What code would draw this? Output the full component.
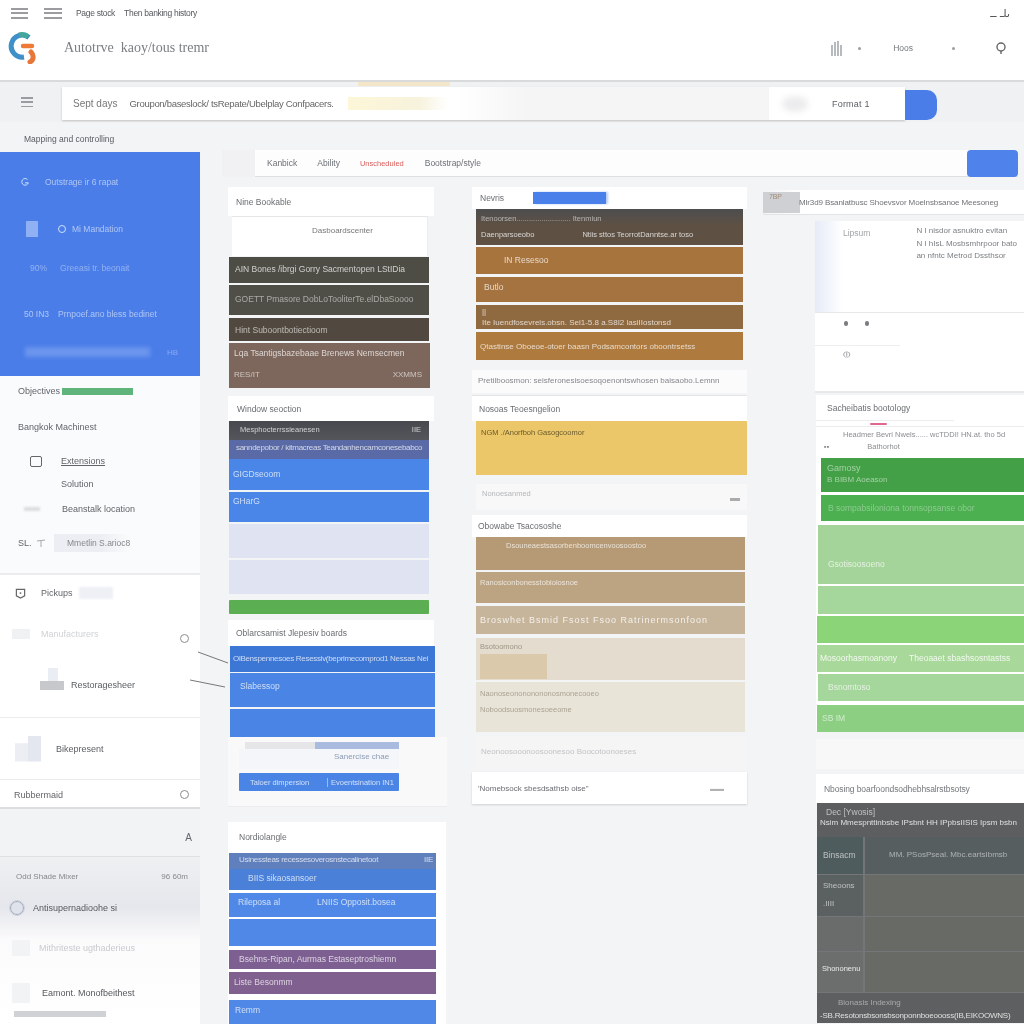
<div class="page">
  <header class="top">
    <div class="top-a">
      <span class="burger b1"><i></i><i></i><i></i></span>
      <span class="burger b2"><i></i><i></i><i></i></span>
      <span class="crumb c1">Page stock</span>
      <span class="crumb">Then banking history</span>
      <span class="sign">ىلـ ــ</span>
    </div>
    <div class="top-b">
      <svg class="logo" viewBox="0 0 30 32" width="30" height="32" aria-hidden="true">
        <path d="M21 5.5A11 11 0 1 0 16 25" fill="none" stroke="#3f8fc8" stroke-width="5"/>
        <path d="M20 4.6A11 11 0 0 0 11 3" fill="none" stroke="#43a89a" stroke-width="5"/>
        <path d="M15 14h9" stroke="#ee7a35" stroke-width="4.5" stroke-linecap="round"/>
        <path d="M23 20c3 3 3 8-1 10" fill="none" stroke="#e8763a" stroke-width="5" stroke-linecap="round"/>
      </svg>
      <span class="title">Autotrve &nbsp;kaoy/tous tremr</span>
      <span class="tools">
        <svg class="bars" viewBox="0 0 14 16" width="14" height="16" aria-hidden="true"><path d="M2 5v11M5 2v14M8 1v15M11 5v11" stroke="#9a9da1" stroke-width="1.4"/></svg>
        <i class="tdot d1"></i>
        <span class="hoos">Hoos</span>
        <i class="tdot d2"></i>
        <svg class="lens" viewBox="0 0 12 14" width="12" height="14" aria-hidden="true"><circle cx="6" cy="6" r="4" fill="none" stroke="#666" stroke-width="1.4"/><path d="M6 10v3" stroke="#666" stroke-width="1.4"/></svg>
      </span>
    </div>
  </header>

  <div class="searchrow">
    <span class="burger b3"><i></i><i></i><i></i></span>
    <div class="searchbar">
      <span class="s1">Sept days</span>
      <span class="s2">Groupon/baseslock/ tsRepate/Ubelplay Confpacers.</span>
      <span class="glow"></span>
      <div class="format"><i class="smudge"></i><span>Format 1</span></div>
    </div>
    <div class="go"></div>
    <span class="orange"></span>
  </div>

  <div class="body">
    <aside class="side">
      <div class="side-label">Mapping and controlling</div>
      <nav class="bluepanel">
        <div class="srow sr1">
          <svg viewBox="0 0 12 12" width="10" height="10" aria-hidden="true"><path d="M9 3a4 4 0 1 0 1 4H6" fill="none" stroke="#cfe0ff" stroke-width="1.2"/></svg>
          <span>Outstrage ir 6 rapat</span>
        </div>
        <div class="srow sr2"><i class="pale"></i><i class="ring"></i><span>Mi Mandation</span></div>
        <div class="srow sr3"><b>90%</b><span>Greeasi tr. beonait</span></div>
        <div class="srow sr4"><b>50 IN3</b><span>Prnpoef.ano bless bedinet</span></div>
        <div class="srow sr5"><i class="haze"></i><em>HB</em></div>
      </nav>
      <div class="sidelist">
        <div class="prog"><span>Objectives</span><i></i></div>
        <div class="lhead">Bangkok Machinest</div>
        <div class="lrow l1"><i class="box"></i><span class="ul">Extensions</span></div>
        <div class="lrow l2"><span>Solution</span></div>
        <div class="lrow l3"><i class="dash"></i><span>Beanstalk location</span></div>
        <div class="lrow l4"><span class="sl">SL.</span><svg viewBox="0 0 10 10" width="10" height="10" aria-hidden="true"><path d="M1 3l8-1M5 2v7" stroke="#a6a9ad" stroke-width="1"/></svg><span class="pill">Mmetlin S.arioc8</span></div>
      </div>
      <div class="pick">
        <div class="p1">
          <svg viewBox="0 0 12 12" width="11" height="11" aria-hidden="true"><path d="M1.5 1.5h9v7l-4.500 2.500-4.500-2.500z" fill="none" stroke="#666" stroke-width="1.300"/><circle cx="6" cy="5.500" r="1" fill="#666"/></svg>
          <span>Pickups</span><i class="fog"></i>
        </div>
        <div class="p2"><i class="fog2"></i><span>Manufacturers</span><i class="circle cdown"></i></div>
        <div class="p3"><span class="stack"><i></i><i></i></span><span>Restoragesheer</span></div>
      </div>
      <div class="bike"><span class="steps"><i></i></span><span>Bikepresent</span></div>
      <div class="rub"><span>Rubbermaid</span><i class="circle"></i></div>
      <div class="gap"><span>A</span></div>
      <div class="odd">
        <div class="oddhead"><span>Odd Shade Mixer</span><span>96 60m</span></div>
        <div class="oddactive"><i class="ring2"></i><span>Antisupernadioohe si</span></div>
        <div class="oddfaint"><i></i><span>Mithriteste ugthaderieus</span></div>
        <div class="oddlast"><i></i><span>Eamont. Monofbeithest</span></div>
        <div class="oddbar"></div>
      </div>
    </aside>

    <main class="work">
      <div class="toolbar">
        <span class="tab"></span>
        <span class="ti t1">Kanbick</span>
        <span class="ti t2">Ability</span>
        <span class="ti t3">Unscheduled</span>
        <span class="ti t4">Bootstrap/style</span>
        <span class="tbtn"></span>
      </div>

      <div class="board">
        <div class="col col1">
          <div class="chead ch1">Nine Bookable</div>
          <div class="subbox">Dasboardscenter</div>
          <div class="band a1">AIN Bones /ibrgi Gorry Sacmentopen LStIDia</div>
          <div class="band a2">GOETT Pmasore DobLoTooliterTe.elDbaSoooo</div>
          <div class="band a3">Hint Suboontbotiectioom</div>
          <div class="band a4"><span>Lqa Tsantigsbazebaae Brenews Nemsecmen</span><small><span>RES/IT</span><span>XXMMS</span></small></div>

          <div class="chead ch2">Window seoction</div>
          <div class="band b-a"><span>Mesphocterrssieanesen</span><span>IIE</span></div>
          <div class="band b-b">sanndepobor / kitmacreas Teandanhencamconesebabco</div>
          <div class="band b-c">GIGDseoom</div>
          <div class="band b-d">GHarG</div>
          <div class="band b-e"></div>
          <div class="band b-f"></div>
          <div class="band b-g"></div>

          <div class="chead ch3">Oblarcsamist Jlepesiv boards</div>
          <div class="band e1">OlBenspennesoes Resessiv(beprimecomprod1 Nessas Nei</div>
          <div class="band e2">Slabessop</div>
          <div class="band e3"></div>

          <div class="nest">
            <div class="nest-bar"><i></i><i></i></div>
            <div class="nest-text"><span>Sanercise chae</span></div>
            <div class="nest-btn"><span>Taloer dimpersion</span><span>Evoentsination IN1</span></div>
          </div>

          <div class="lastcard">
            <div class="lc-head">Nordiolangle</div>
            <div class="band f1"><div class="f1top"><span>Usinessteas recessesoverosnstecalinetoot</span><span>IIE</span></div><div class="f1sub">BIIS sikaosansoer</div></div>
            <div class="band f2"><span>Rileposa al</span><span>LNIIS Opposit.bosea</span></div>
            <div class="band f3"></div>
            <div class="band f4">Bsehns-Ripan, Aurmas Estaseptroshiemn</div>
            <div class="band f5">Liste Besonmm</div>
            <div class="band f6">Remm</div>
          </div>
        </div>

        <div class="col col2">
          <div class="chead g0"><span>Nevris</span><i class="bluepill"></i></div>
          <div class="band g1"><span>Itenoorsen.......................... Itenmiun</span><span class="g1b"><span>Daenparsoeobo</span><span>Ntiis sttos TeorrotDanntse.ar toso</span></span></div>
          <div class="band g2"><span>IN Resesoo</span></div>
          <div class="band g3">Butlo</div>
          <div class="band g4"><span>||</span><span>Ite Iuendfosevreis.obsn. Sei1-5.8 a.S8I2 lasiIIostonsd</span></div>
          <div class="band g5">Qtastinse Oboeoe-otoer baasn Podsamcontors oboontrsetss</div>
          <div class="noteline">Pretilboosmon: seisferonesisoesoqoenontswhosen baisaobo.Lemnn</div>
          <div class="chead g6">Nosoas Teoesngelion</div>
          <div class="band g7">NGM ./Anorfboh Gasogcoomor</div>
          <div class="paleblock"><span>Nonoesanmed</span><i></i></div>
          <div class="chead g8">Obowabe Tsacososhe</div>
          <div class="band h1"><span>Dsouneaestsasorbenboomcenvoosoostoo</span></div>
          <div class="band h2"><span>Ranosiconbonesstobioiosnoe</span></div>
          <div class="band h3"><span>Broswhet Bsmid Fsost Fsoo Ratrinermsonfoon</span></div>
          <div class="band h4"><span>Bsotoomono</span><i class="dither"></i></div>
          <div class="band h5"><span>Naonoseonononononosmonecooeo</span><span>Noboodsuosmonesoeeome</span></div>
          <div class="soft"><span>Neonoosooonoosoonesoo Boocotoonoeses</span></div>
          <div class="foot"><span>'Nomebsock sbesdsathsb oise"</span><span class="fw">▬▬</span></div>
        </div>

        <div class="col col3">
          <div class="c3head"><span class="thumb">7BP</span><span>Mlr3d9 Bsanlatbusc Shoevsvor Moelnsbsanoe Meesoneg</span></div>
          <div class="c3box">
            <div class="cb-top"><span>Lipsum</span><div class="cb-lines"><span>N I nisdor asnuktro evitan</span><span>N I hIsL Mosbsmhrpoor bato</span><span>an nfntc Metrod Dssthsor</span></div></div>
            <div class="cb-dots"><i></i><i></i></div>
            <div class="cb-last"><span>⦶</span></div>
          </div>
          <div class="c3sec">
            <div class="sec-title">Sacheibatis bootology</div>
            <div class="sec-mark"><i></i></div>
            <div class="sec-l1">Headmer Bevri Nwels...... wcTDDI! HN.at. tho 5d</div>
            <div class="sec-l2"><span>▪▪</span><span>Bathorhot</span></div>
            <div class="band k1"><span class="gtitle">Gamosy</span><span>B BIBM Aoeason</span></div>
            <div class="band k2">B sompabsiloniona tonnsopsanse obor</div>
            <div class="band k3">Gsotisoosoeno</div>
            <div class="band k4"></div>
            <div class="band k5"></div>
            <div class="band k6"><span>Mosoorhasmoanony</span><span>Theoaaet sbashsosntastss</span></div>
            <div class="band k7">Bsnomtoso</div>
            <div class="band k8">SB IM</div>
          </div>
          <div class="softgap"></div>
          <div class="grayhead">Nbosing boarfoondsodhebhsalrstbsotsy</div>
          <div class="graypanel">
            <div class="gp-top"><span>Dec [Ywosis]</span><span class="gp-long">Nsim Mmespnttinbsbe IPsbnt HH IPpbsIISIS Ipsm bsbn</span></div>
            <div class="gp-r1"><span class="gl gl1">Binsacm</span><span class="gr gr1">MM. PSosPseal. Mbc.eartsIbmsb</span></div>
            <div class="gp-r2"><span class="gl gl2"><span>Sheoons</span><span>.IIII</span></span><span class="gr gr2"></span></div>
            <div class="gp-r3"><span class="gl gl3"></span><span class="gr gr3"></span></div>
            <div class="gp-r4"><span class="gl gl4">Shononenu</span><span class="gr gr4"></span></div>
            <div class="gp-end"><span class="e-a">Bionasis Indexing</span><span class="e-b">-SB.Resotonsbsonsbsonponnboeoooss(IB,EIKOOWNS)</span></div>
          </div>
        </div>
      </div>
    </main>
  </div>

  <svg class="leaders" viewBox="0 0 40 40" width="40" height="40" aria-hidden="true">
    <path d="M8 2l30 11M0 30l35 7" stroke="#777" stroke-width="1" fill="none"/>
  </svg>
</div>

<style>
  :global(body) { margin: 0; background: #f3f4f6; }
  .page { position: relative; width: 1024px; height: 1024px; overflow: hidden; display: flex; flex-direction: column; background: #f3f4f6; font-family: "Liberation Sans", Arial, sans-serif; font-size: 9px; color: #62656a; white-space: nowrap; filter: blur(.35px); }
  i, em { font-style: normal; display: block; }
  .top { height: 82px; flex: none; box-sizing: border-box; background: #fff; border-bottom: 2px solid #d9dadb; }
  .top-a { height: 30px; display: flex; align-items: center; }
  .burger { display: flex; flex-direction: column; justify-content: space-between; height: 11px; flex: none; }
  .burger i { height: 2px; background: #9b9ca0; }
  .b1 { width: 17px; margin: 0 0 4px 11px; }
  .b2 { width: 18px; margin: 0 0 4px 16px; }
  .crumb { font-size: 8.500px; color: #55585c; margin-bottom: 4px; margin-left: 9px; letter-spacing: -.3px; }
  .c1 { margin-left: 14px; }
  .sign { margin-left: auto; margin-right: 14px; margin-bottom: 4px; font-size: 11px; color: #555; font-family: "DejaVu Sans", sans-serif; }
  .top-b { height: 36px; display: flex; align-items: center; padding-left: 8px; }
  .logo { flex: none; }
  .title { font-size: 14px; color: #7b7e82; margin-left: 26px; font-family: "Liberation Serif", serif; }
  .tools { margin-left: auto; display: flex; align-items: center; padding-right: 17px; }
  .tdot { width: 3px; height: 3px; border-radius: 50%; background: #9a9da1; }
  .d1 { margin-left: 14px; }
  .hoos { font-size: 8.500px; margin-left: 32px; color: #75787c; }
  .d2 { margin-left: 39px; }
  .lens { margin-left: 40px; }

  .searchrow { height: 40px; flex: none; position: relative; display: flex; align-items: center; background: #f0f1f2; }
  .b3 { width: 12px; height: 10px; margin: 0 29px 0 21px; }
  .b3 i { height: 1.500px; }
  .searchbar { width: 843px; height: 33px; flex: none; display: flex; align-items: center; margin-top: 3px; background: linear-gradient(90deg, #fff 0, #fff 47%, #f5f5f6 55%, #f4f4f5 100%); box-shadow: 0 1px 2px rgba(0,0,0,.2); }
  .s1 { font-size: 10px; margin-left: 11px; color: #777; }
  .s2 { font-size: 9.500px; margin-left: 12px; width: 214px; color: #666; letter-spacing: -.3px; }
  .glow { width: 100px; height: 13px; margin-left: 5px; background: linear-gradient(90deg, #fdf7d8, #f7f2dc 70%, rgba(247,242,220,0)); }
  .format { margin-left: auto; width: 136px; height: 33px; background: #fff; display: flex; align-items: center; font-size: 9px; color: #5d6064; }
  .smudge { width: 26px; height: 16px; margin-left: 13px; border-radius: 50%; background: #ececee; filter: blur(3px); }
  .format span { margin-left: 24px; letter-spacing: .2px; }
  .go { width: 32px; height: 30px; flex: none; margin-top: 6px; background: #4a7de8; border-radius: 0 10px 10px 0; }
  .orange { position: absolute; left: 358px; top: 0; width: 92px; height: 4px; background: #f4e6c8; }

  .body { flex: 1; display: flex; min-height: 0; }
  .side { width: 200px; flex: none; display: flex; flex-direction: column; }
  .side-label { height: 30px; box-sizing: border-box; padding: 12px 0 0 24px; font-size: 8.500px; color: #5a5d61; }
  .bluepanel { height: 224px; flex: none; box-sizing: border-box; padding-top: 22px; background: #4a7de8; color: rgba(255,255,255,.55); }
  .srow { height: 16px; display: flex; align-items: center; font-size: 8.500px; }
  .sr1 { padding-left: 20px; }
  .sr1 span { margin-left: 15px; }
  .sr2 { margin-top: 31px; padding-left: 26px; }
  .pale { width: 12px; height: 16px; background: #8fb0f2; }
  .ring { width: 6px; height: 6px; margin-left: 20px; border: 1px solid #cfe0ff; border-radius: 50%; }
  .sr2 span { margin-left: 6px; }
  .sr3 { margin-top: 23px; padding-left: 30px; opacity: .7; }
  .sr3 b, .sr4 b { font-weight: 400; }
  .sr3 span { margin-left: 13px; }
  .sr4 { margin-top: 30px; padding-left: 24px; }
  .sr4 span { margin-left: 9px; }
  .sr5 { margin-top: 22px; padding-left: 25px; }
  .haze { width: 125px; height: 10px; background: #6b95ed; filter: blur(2px); }
  .sr5 em { margin-left: 17px; font-size: 8px; opacity: .6; }

  .sidelist { height: 199px; flex: none; box-sizing: border-box; background: #fafbfc; border-bottom: 2px solid #ececee; padding: 9px 0 0 18px; }
  .prog { display: flex; align-items: center; height: 12px; }
  .prog span { width: 44px; }
  .prog i { width: 71px; height: 7px; background: #5fb47c; }
  .lhead { margin-top: 24px; height: 12px; line-height: 12px; }
  .lrow { display: flex; align-items: center; height: 12px; }
  .l1 { margin-top: 22px; padding-left: 12px; }
  .box { width: 10px; height: 9px; border: 1px solid #666; border-radius: 2px; }
  .ul { margin-left: 19px; text-decoration: underline; }
  .l2 { margin-top: 11px; padding-left: 43px; }
  .l3 { margin-top: 13px; padding-left: 6px; }
  .dash { width: 16px; height: 4px; background: #dcdde0; filter: blur(1px); }
  .l3 span { margin-left: 22px; }
  .l4 { margin-top: 22px; }
  .sl { width: 18px; }
  .l4 svg { margin-right: 5px; }
  .pill { height: 18px; line-height: 18px; padding: 0 0 0 13px; margin-left: 3px; background: linear-gradient(90deg, #eceef3 60%, #fafbfc); color: #85888c; font-size: 8.500px; }

  .pick { height: 143px; flex: none; box-sizing: border-box; background: #fff; border-bottom: 1px solid #ececee; padding: 12px 0 0 15px; }
  .p1 { display: flex; align-items: center; height: 12px; }
  .p1 span { margin-left: 15px; }
  .fog { width: 34px; height: 12px; margin-left: 6px; background: #eef0f5; filter: blur(1px); }
  .p2 { margin-top: 28px; display: flex; align-items: center; height: 14px; color: #d0d2d5; }
  .fog2 { width: 18px; height: 10px; margin-left: -3px; background: #f0f1f2; }
  .p2 span { margin-left: 11px; }
  .circle { width: 7px; height: 7px; flex: none; border: 1px solid #8b8d90; border-radius: 50%; margin-left: auto; margin-right: 11px; }
  .cdown { margin-top: 9px; }
  .p3 { margin-top: 27px; display: flex; align-items: flex-end; }
  .stack { width: 24px; margin-left: 25px; display: block; }
  .stack i:first-child { width: 10px; height: 13px; margin-left: 8px; background: #eaeef4; }
  .stack i:last-child { width: 24px; height: 9px; background: #c6c8cb; }
  .p3 span:last-child { margin-left: 7px; color: #5b5e62; }

  .bike { height: 62px; flex: none; box-sizing: border-box; background: #fff; border-bottom: 1px solid #ececee; display: flex; align-items: center; padding-left: 15px; color: #5b5e62; }
  .steps { width: 26px; height: 26px; background: linear-gradient(90deg, #eceef4 50%, #e4e7f0 50%); clip-path: polygon(0 30%, 50% 30%, 50% 0, 100% 0, 100% 100%, 0 100%); }
  .bike span:last-child { margin-left: 15px; }
  .rub { height: 29px; flex: none; box-sizing: border-box; background: #fff; border-bottom: 2px solid #dcdde0; display: flex; align-items: center; padding: 2px 0 0 14px; }
  .gap { height: 48px; flex: none; box-sizing: border-box; background: #f2f3f4; border-bottom: 1px solid #dfe0e2; display: flex; align-items: flex-end; justify-content: flex-end; padding: 0 8px 13px 0; font-size: 10px; }
  .odd { flex: 1; background: linear-gradient(180deg, #eff0f2 0, #e6e7ec 30%, #fbfbfc 50%, #fff 100%); padding: 15px 0 0; }
  .oddhead { display: flex; justify-content: space-between; padding: 0 12px 0 16px; font-size: 8px; color: #85888c; }
  .oddactive { margin-top: 15px; height: 24px; display: flex; align-items: center; padding-left: 10px; color: #55585c; }
  .ring2 { width: 12px; height: 12px; border: 1px solid #9ea7b8; border-radius: 50%; background: #dfe3ec; outline: 1px solid #d0d4dc; }
  .oddactive span { margin-left: 9px; }
  .oddfaint { margin-top: 20px; height: 16px; display: flex; align-items: center; padding-left: 12px; color: #c8cace; }
  .oddfaint i, .oddlast i { width: 18px; height: 16px; background: #f2f3f5; }
  .oddfaint span { margin-left: 9px; }
  .oddlast { margin-top: 27px; height: 20px; display: flex; align-items: center; padding-left: 12px; color: #55585c; }
  .oddlast i { height: 20px; }
  .oddlast span { margin-left: 12px; }
  .oddbar { width: 92px; height: 6px; margin: 8px 0 0 14px; background: #d0d1d4; }

  .work { flex: 1; min-width: 0; padding-top: 28px; }
  .toolbar { margin-left: 22px; margin-right: 6px; height: 27px; box-sizing: border-box; display: flex; align-items: center; background: #fdfdfe; border-bottom: 1px solid #dedfe1; font-size: 8.500px; }
  .tab { width: 33px; height: 27px; background: #f1f1f3; }
  .ti { color: #6d7074; }
  .t1 { margin-left: 12px; }
  .t2 { margin-left: 20px; }
  .t3 { margin-left: 20px; color: #d8605c; font-size: 7.500px; }
  .t4 { margin-left: 21px; }
  .tbtn { margin-left: auto; width: 51px; height: 27px; border-radius: 4px; background: #4f82ea; }

  .board { margin-top: 10px; display: flex; align-items: flex-start; }
  .col { flex: none; display: flex; flex-direction: column; }
  .col1 { width: 219px; margin-left: 28px; }
  .col2 { width: 275px; margin-left: 25px; }
  .col3 { width: 261px; margin-left: 16px; }
  .chead { flex: none; box-sizing: border-box; background: #fff; font-size: 8.500px; color: #6a6d71; display: flex; align-items: center; padding-left: 8px; }
  .band { flex: none; box-sizing: border-box; color: rgba(255,255,255,.72); font-size: 8.500px; }

  .ch1 { width: 206px; height: 29px; }
  .subbox { width: 196px; height: 40px; margin-left: 4px; box-sizing: border-box; padding: 9px 0 0 80px; background: #fff; border-top: 1px solid #e6e6e8; border-right: 1px solid #ececee; color: #777; font-size: 8px; }
  .a1 { width: 200px; height: 26px; margin: 1px 0 0 1px; padding: 7px 0 0 6px; background: #4e4d45; }
  .a2 { width: 200px; height: 30px; margin: 2px 0 0 1px; padding: 9px 0 0 6px; background: #504f47; color: rgba(255,255,255,.5); }
  .a3 { width: 200px; height: 23px; margin: 3px 0 0 1px; padding: 7px 0 0 6px; background: #51493f; color: rgba(255,255,255,.6); }
  .a4 { width: 201px; height: 45px; margin: 2px 0 0 1px; padding: 5px 8px 0 5px; background: #7d675c; display: flex; flex-direction: column; }
  .a4 small { display: flex; justify-content: space-between; font-size: 8px; margin-top: 12px; color: rgba(255,255,255,.6); }

  .ch2 { width: 206px; height: 25px; margin-top: 8px; padding-left: 9px; }
  .b-a { width: 200px; height: 19px; margin-left: 1px; padding: 4px 8px 0 11px; display: flex; justify-content: space-between; background: linear-gradient(#47494e, #55565b); font-size: 7.500px; }
  .b-b { width: 200px; height: 19px; margin-left: 1px; padding: 3px 0 0 7px; background: #5a6aa6; font-size: 8px; letter-spacing: -.3px; }
  .b-c { width: 200px; height: 31px; margin-left: 1px; padding: 10px 0 0 4px; background: #4a86e8; }
  .b-d { width: 200px; height: 30px; margin: 2px 0 0 1px; padding: 4px 0 0 4px; background: #4a86e8; }
  .b-e { width: 200px; height: 34px; margin: 2px 0 0 1px; background: #dfe3f2; }
  .b-f { width: 200px; height: 34px; margin: 2px 0 0 1px; background: #dfe3f2; }
  .b-g { width: 200px; height: 14px; margin: 6px 0 0 1px; border-radius: 1px; background: #5cae52; }

  .ch3 { width: 206px; height: 26px; margin-top: 6px; }
  .e1 { width: 205px; height: 26px; margin-left: 2px; padding: 8px 0 0 3px; background: #3d77d6; font-size: 8px; letter-spacing: -.3px; }
  .e2 { width: 205px; height: 34px; margin: 1px 0 0 2px; padding: 8px 0 0 10px; background: #4a84e4; }
  .e3 { width: 205px; height: 28px; margin: 2px 0 0 2px; background: #4a84e4; }
  .nest { width: 219px; height: 70px; box-sizing: border-box; padding: 5px 0 0 11px; background: #f9f9fa; border-bottom: 1px solid #ececee; }
  .nest-bar { display: flex; width: 154px; height: 7px; margin-left: 6px; }
  .nest-bar i:first-child { width: 70px; background: #e6e6e8; }
  .nest-bar i:last-child { flex: 1; background: #a9bbdf; }
  .nest-text { width: 160px; height: 20px; box-sizing: border-box; padding: 3px 0 0 95px; background: #f5f6f9; color: #8b9bb5; font-size: 8px; }
  .nest-btn { width: 160px; height: 18px; margin-top: 4px; display: flex; align-items: center; background: #4a84e4; border-radius: 1px; color: rgba(255,255,255,.75); font-size: 7.500px; }
  .nest-btn span:first-child { width: 89px; padding-left: 11px; box-sizing: border-box; border-right: 1px solid #9dbcf0; }
  .nest-btn span:last-child { padding-left: 3px; }

  .lastcard { width: 218px; margin-top: 15px; display: flex; flex-direction: column; background: #fff; }
  .lc-head { height: 30px; box-sizing: border-box; padding: 10px 0 0 11px; font-size: 8.500px; color: #6a6d71; }
  .f1 { width: 207px; height: 37px; margin: 1px 0 0 1px; background: #4a80d8; display: flex; flex-direction: column; }
  .f1top { height: 14px; display: flex; justify-content: space-between; padding: 2px 3px 0 10px; background: #5f7fbd; font-size: 8px; letter-spacing: -.3px; }
  .f1sub { padding: 4px 0 0 19px; }
  .f2 { width: 207px; height: 24px; margin: 3px 0 0 1px; padding: 4px 0 0 9px; display: flex; gap: 37px; background: #4f88e6; }
  .f3 { width: 207px; height: 27px; margin: 2px 0 0 1px; background: #4f88e6; }
  .f4 { width: 207px; height: 19px; margin: 4px 0 0 1px; padding: 4px 0 0 10px; background: #7d5f92; }
  .f5 { width: 207px; height: 22px; margin: 3px 0 0 1px; padding: 5px 0 0 5px; background: #80608f; }
  .f6 { width: 207px; height: 24px; margin: 6px 0 0 1px; padding: 5px 0 0 6px; background: #4f88e6; }

  .g0 { height: 22px; }
  .bluepill { width: 73px; height: 12px; margin-left: 29px; background: #4a80ea; box-shadow: 2px 0 2px rgba(74,128,234,.4); }
  .g1 { width: 267px; height: 36px; margin-left: 4px; padding: 5px 0 0 5px; display: flex; flex-direction: column; gap: 7px; background: linear-gradient(#4c4d4f, #5e5144 45%); font-size: 7.500px; color: rgba(255,255,255,.55); }
  .g1b { display: flex; gap: 48px; color: rgba(255,255,255,.75); }
  .g2 { width: 267px; height: 27px; margin: 2px 0 0 4px; padding: 8px 0 0 28px; background: #a8743d; }
  .g3 { width: 267px; height: 25px; margin: 3px 0 0 4px; padding: 5px 0 0 8px; background: #a4733f; }
  .g4 { width: 267px; height: 24px; margin: 3px 0 0 4px; padding: 1px 0 0 6px; display: flex; flex-direction: column; background: #8f6a40; font-size: 8px; line-height: 11px; }
  .g5 { width: 267px; height: 28px; margin: 3px 0 0 4px; padding: 10px 0 0 4px; background: #ae7a3e; font-size: 8px; }
  .noteline { width: 275px; height: 23px; margin-top: 10px; box-sizing: border-box; padding: 6px 0 0 6px; background: #fbfbfc; font-size: 8px; color: #85888c; }
  .g6 { width: 275px; height: 26px; margin-top: 2px; border-top: 1px solid #e4e4e6; padding-left: 7px; }
  .g7 { width: 271px; height: 54px; margin-left: 4px; padding: 7px 0 0 5px; background: #ecc76a; color: #6a5a2c; font-size: 7.500px; }
  .paleblock { width: 271px; height: 26px; margin: 9px 0 0 4px; box-sizing: border-box; display: flex; justify-content: space-between; padding: 5px 7px 0 6px; background: #f8f8f9; color: #b5b7ba; font-size: 7.500px; }
  .paleblock i { width: 10px; height: 3px; margin-top: 9px; background: #a9abad; }
  .g8 { width: 275px; height: 22px; margin-top: 5px; padding-left: 6px; }
  .h1 { width: 269px; height: 33px; margin-left: 4px; padding: 4px 0 0 30px; background: #b69a75; font-size: 7.500px; color: rgba(255,255,255,.7); }
  .h2 { width: 269px; height: 31px; margin: 2px 0 0 4px; padding: 6px 0 0 4px; background: #bca483; font-size: 7.500px; color: rgba(255,255,255,.7); }
  .h3 { width: 269px; height: 28px; margin: 3px 0 0 4px; padding: 9px 0 0 4px; background: #c6b59b; font-size: 9px; letter-spacing: 1px; color: rgba(255,255,255,.8); }
  .h4 { width: 269px; height: 42px; margin: 4px 0 0 4px; padding: 4px 0 0 4px; background: #e3dccf; color: rgba(90,80,60,.5); font-size: 7.500px; }
  .dither { width: 67px; height: 25px; margin-top: 3px; background: #dbc9ab; }
  .h4 span { display: block; }
  .h5 { width: 269px; height: 50px; margin: 2px 0 0 4px; padding: 7px 0 0 4px; display: flex; flex-direction: column; gap: 7px; background: #e9e4d8; color: rgba(90,80,60,.45); font-size: 7.500px; }
  .soft { width: 270px; height: 34px; margin: 4px 0 0 4px; padding: 11px 0 0 5px; box-sizing: border-box; background: #f5f5f6; color: #c3c4c6; font-size: 8px; }
  .foot { width: 275px; height: 32px; margin-top: 2px; box-sizing: border-box; display: flex; justify-content: space-between; align-items: center; padding: 0 23px 0 6px; background: #fff; font-size: 8px; color: #6a6d71; box-shadow: 0 1px 2px rgba(0,0,0,.15); }
  .fw { color: #b0b2b4; font-size: 7px; }

  .c3head { height: 24px; margin-top: 3px; display: flex; align-items: center; background: linear-gradient(90deg, #f3f4f6, #fff 15%); font-size: 8px; letter-spacing: -.1px; color: #6f7276; border-bottom: 1px solid #e3e4e6; }
  .thumb { width: 37px; height: 21px; margin-right: -1px; padding: 1px 0 0 6px; box-sizing: border-box; background: #cfd0d3; color: #a58d7a; font-size: 7px; flex: none; }
  .c3box { margin: 6px 0 0 52px; width: 209px; height: 172px; box-sizing: border-box; background: #fff; display: flex; flex-direction: column; border-bottom: 2px solid #e8e9eb; }
  .cb-top { height: 92px; flex: none; box-sizing: border-box; padding: 7px 0 0 28px; display: flex; border-bottom: 1px solid #e6e7e9; background: linear-gradient(90deg, #e6ebf7 0, #fff 28px); color: #a2a5a9; font-size: 8.500px; }
  .cb-lines { margin: -2px 0 0 46px; display: flex; flex-direction: column; gap: 2px; line-height: 10.500px; color: #7d8084; font-size: 8px; }
  .cb-dots { height: 33px; flex: none; box-sizing: border-box; padding: 8px 0 0 29px; display: flex; gap: 17px; border-bottom: 1px solid #eee; width: 85px; }
  .cb-dots i { width: 4px; height: 5px; background: #7b7d80; border-radius: 2px; }
  .cb-last { padding: 3px 0 0 29px; font-size: 9px; color: #a5a7aa; }
  .c3sec { margin: 2px 0 0 53px; width: 208px; background: #fff; display: flex; flex-direction: column; }
  .sec-title { height: 26px; box-sizing: border-box; padding: 8px 0 0 11px; font-size: 8.500px; color: #6a6d71; border-bottom: 1px solid #ededef; margin-right: 70px; }
  .sec-mark { height: 5px; border-bottom: 1px solid #ececee; }
  .sec-mark i { width: 17px; height: 2px; margin: 2px 0 0 54px; background: #e1668f; border-radius: 2px; }
  .sec-l1 { height: 12px; padding: 3px 0 0 27px; font-size: 7.500px; color: #8a8d91; }
  .sec-l2 { height: 11px; display: flex; padding-left: 8px; gap: 38px; font-size: 7.500px; color: #8a8d91; margin-bottom: 5px; }
  .k1 { height: 34px; margin-left: 5px; padding: 5px 0 0 6px; display: flex; flex-direction: column; gap: 2px; background: #43a047; font-size: 8px; color: rgba(255,255,255,.5); }
  .gtitle { font-size: 9px; }
  .k2 { height: 26px; margin: 3px 0 0 5px; padding: 8px 0 0 7px; background: #4caf50; color: rgba(255,255,255,.35); }
  .k3 { height: 59px; margin: 4px 0 0 2px; padding: 34px 0 0 10px; background: #a4d49a; color: rgba(255,255,255,.7); }
  .k4 { height: 28px; margin: 2px 0 0 2px; background: #a5d69b; }
  .k5 { height: 27px; margin: 2px 0 0 1px; background: #8bd478; }
  .k6 { height: 27px; margin: 2px 0 0 1px; padding: 8px 0 0 3px; display: flex; gap: 12px; background: #a8d89a; color: rgba(255,255,255,.85); }
  .k7 { height: 27px; margin: 2px 0 0 2px; padding: 8px 0 0 10px; background: #a5d69c; color: rgba(255,255,255,.7); }
  .k8 { height: 27px; margin: 4px 0 0 1px; padding: 8px 0 0 5px; background: #8ccf82; color: rgba(255,255,255,.6); }
  .softgap { width: 208px; height: 30px; margin: 7px 0 0 53px; background: #f8f8f9; }
  .grayhead { width: 208px; height: 29px; margin: 5px 0 0 53px; box-sizing: border-box; padding: 10px 0 0 8px; background: #fff; color: #74777b; font-size: 8.500px; letter-spacing: -.1px; }
  .graypanel { width: 207px; height: 220px; margin-left: 54px; display: flex; flex-direction: column; background: #696b6a; color: rgba(255,255,255,.6); font-size: 8.500px; }
  .gp-top { height: 34px; flex: none; box-sizing: border-box; padding: 4px 0 0 9px; display: flex; flex-direction: column; gap: 1px; background: #5c5e60; }
  .gp-long { margin-left: -6px; font-size: 8px; color: rgba(255,255,255,.8); }
  .gp-r1, .gp-r2, .gp-r3, .gp-r4 { display: flex; flex: none; border-bottom: 1px solid #74767a; }
  .gp-r1 { height: 37px; }
  .gp-r2 { height: 41px; }
  .gp-r3 { height: 34px; }
  .gp-r4 { height: 40px; }
  .gl { width: 48px; flex: none; box-sizing: border-box; padding: 13px 0 0 6px; border-right: 2px solid #737577; }
  .gr { flex: 1; }
  .gl1 { background: #4f5c5e; }
  .gr1 { background: #565e60; padding: 13px 0 0 24px; font-size: 8px; color: rgba(255,255,255,.5); }
  .gl2 { background: #5b6060; padding-top: 6px; display: flex; flex-direction: column; gap: 9px; font-size: 8px; }
  .gr2, .gr3, .gr4 { background: #686a66; }
  .gl3 { background: #6a6c6b; }
  .gl4 { background: #6c6e6d; padding: 12px 0 0 5px; font-size: 7.500px; color: rgba(255,255,255,.85); }
  .gp-end { flex: 1; display: flex; flex-direction: column; gap: 4px; box-sizing: border-box; padding: 5px 0 0 3px; background: #5e5f60; font-size: 8px; }
  .e-a { margin-left: 18px; color: rgba(255,255,255,.45); }
  .e-b { color: rgba(255,255,255,.8); letter-spacing: -.2px; }

  .leaders { position: absolute; left: 190px; top: 650px; }
</style>
